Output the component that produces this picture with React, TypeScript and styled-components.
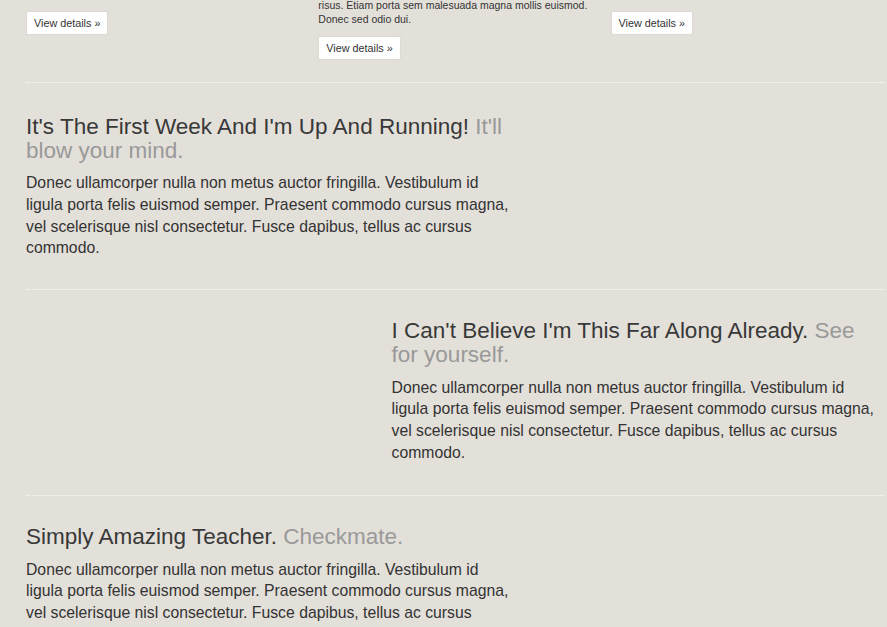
import React from "react";
import styled, { createGlobalStyle } from "styled-components";

const Global = createGlobalStyle`
  html, body {
    margin: 0;
    padding: 0;
    background: #e3e0da;
    overflow: hidden;
  }
  body {
    font-family: "Liberation Sans", Arial, Helvetica, sans-serif;
    color: #333;
  }
`;

const Page = styled.div`
  width: 859px;
  padding: 0 26px;
  margin-top: -61.5px;
`;

const Marketing = styled.div`
  display: grid;
  grid-template-columns: repeat(3, 274px);
  column-gap: 18.3px;
  align-items: start;
  margin-bottom: 22px;
`;

const Column = styled.div`
  display: flex;
  flex-direction: column;
`;

const ColumnTitle = styled.h2`
  font-size: 20px;
  line-height: 25px;
  font-weight: normal;
  margin: 0 0 9px;
  color: #333;
`;

const ColumnText = styled.p`
  font-size: 10.5px;
  line-height: 14px;
  margin: 0 0 10px;
  color: #333;
`;

const ButtonRow = styled.div`
  display: flex;
`;

const DetailsButton = styled.a`
  display: inline-block;
  box-sizing: border-box;
  height: 24px;
  padding: 4px 7px;
  font-size: 10.8px;
  line-height: 14px;
  color: #333;
  background: #fff;
  border: 1px solid #dcd9d3;
  border-radius: 2px;
  text-decoration: none;
  white-space: nowrap;
`;

const Divider = styled.hr`
  border: 0;
  border-top: 1px dotted #fbfaf8;
  height: 0;
  margin: 0;
`;

const Featurette = styled.section<{ $flip?: boolean }>`
  display: grid;
  grid-template-columns: ${(p) => (p.$flip ? "365.6px 490px" : "490px")};
  padding: 29.6px 0 31.4px;

  &:first-of-type {
    padding-top: 32.6px;
    padding-bottom: 30px;
  }
`;

const FeatureText = styled.div<{ $flip?: boolean }>`
  grid-column: ${(p) => (p.$flip ? 2 : 1)};
`;

const FeatureHeading = styled.h2`
  font-size: 22.5px;
  line-height: 24px;
  font-weight: normal;
  margin: 0 0 9.4px;
  color: #383838;
`;

const Muted = styled.span`
  color: #999;
`;

const FeatureBody = styled.p`
  font-size: 15.75px;
  line-height: 21.6px;
  margin: 0;
  color: #333;
`;

const body =
  "Donec ullamcorper nulla non metus auctor fringilla. Vestibulum id ligula porta felis euismod semper. Praesent commodo cursus magna, vel scelerisque nisl consectetur. Fusce dapibus, tellus ac cursus commodo.";

const features = [
  { title: "It's The First Week And I'm Up And Running!", muted: "It'll blow your mind.", flip: false },
  { title: "I Can't Believe I'm This Far Along Already.", muted: "See for yourself.", flip: true },
  { title: "Simply Amazing Teacher.", muted: "Checkmate.", flip: false },
];

export default function App() {
  return (
    <>
      <Global />
      <Page>
        <Marketing>
          <Column>
            <ColumnTitle>Heading</ColumnTitle>
            <ColumnText>
              Cras mattis consectetur purus sit amet fermentum.
              <br />
              Nullam id dolor id nibh ultricies vehicula.
            </ColumnText>
            <ButtonRow>
              <DetailsButton href="#">View details »</DetailsButton>
            </ButtonRow>
          </Column>
          <Column>
            <ColumnTitle>
              Heading
              <br />
              Continued
            </ColumnTitle>
            <ColumnText>
              risus. Etiam porta sem malesuada magna mollis euismod.
              <br />
              Donec sed odio dui.
            </ColumnText>
            <ButtonRow>
              <DetailsButton href="#">View details »</DetailsButton>
            </ButtonRow>
          </Column>
          <Column>
            <ColumnTitle>Heading</ColumnTitle>
            <ColumnText>
              Cras justo odio, dapibus ac facilisis in.
              <br />
              Etiam porta sem malesuada.
            </ColumnText>
            <ButtonRow>
              <DetailsButton href="#">View details »</DetailsButton>
            </ButtonRow>
          </Column>
        </Marketing>

        {features.map((f) => (
          <React.Fragment key={f.title}>
            <Divider />
            <Featurette $flip={f.flip}>
              <FeatureText $flip={f.flip}>
                <FeatureHeading>
                  {f.title} <Muted>{f.muted}</Muted>
                </FeatureHeading>
                <FeatureBody>{body}</FeatureBody>
              </FeatureText>
            </Featurette>
          </React.Fragment>
        ))}
      </Page>
    </>
  );
}
